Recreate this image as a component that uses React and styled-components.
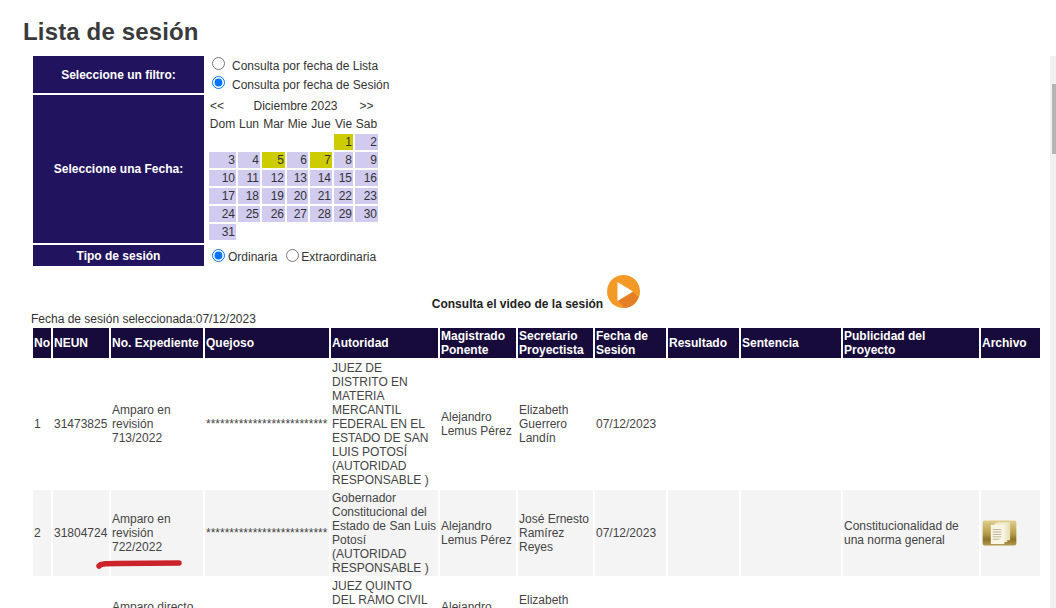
import styled, { createGlobalStyle } from 'styled-components';

const GlobalStyle = createGlobalStyle`
  html, body {
    margin: 0;
    height: 608px;
    overflow: hidden;
    background: #fff;
  }
  body {
    font-family: "Liberation Sans", Arial, sans-serif;
    font-size: 12px;
    line-height: 14px;
    color: #333;
  }
`;

const Page = styled.div`
  position: relative;
  width: 1056px;
  height: 608px;
  overflow: hidden;
`;

const Title = styled.h1`
  margin: 0;
  padding: 18px 0 0 23px;
  height: 36px;
  font-size: 24px;
  line-height: 28px;
  font-weight: bold;
  letter-spacing: 0.15px;
  color: #3a3a3a;
`;

const Content = styled.div`
  width: 1011px;
  margin-left: 31px;
`;

const FilterTable = styled.table`
  border-collapse: separate;
  border-spacing: 2px;
  table-layout: fixed;
  width: 375px;
`;

const FilterLabel = styled.td`
  width: 171px;
  height: ${(p) => p.$height}px;
  padding: 0;
  background: #22135e;
  color: #fff;
  font-weight: bold;
  text-align: center;
`;

const FilterValue = styled.td`
  padding: 0;
  vertical-align: top;
  white-space: nowrap;
`;

const RadioLine = styled.label`
  display: flex;
  align-items: center;
  box-sizing: border-box;
  height: 18.5px;
  padding: 2px 0 0 6px;
`;

const RadioRow = styled.div`
  display: flex;
  align-items: center;
  height: 21px;
  padding: 2px 0 0 6px;
  box-sizing: border-box;
`;

const Radio = styled.input.attrs({ type: 'radio' })`
  width: 13px;
  height: 13px;
  margin: 0 ${(p) => p.$gap}px ${(p) => p.$lift}px 0;
  flex: none;
`;

const TipoLabel = styled.span`
  margin-right: 9px;
`;

const CalendarTable = styled.table`
  border-collapse: separate;
  border-spacing: 2px;
  table-layout: fixed;
  width: 173px;
  margin: 1px 0 0 1px;
`;

const NavCell = styled.td`
  height: 16px;
  padding: 0 0 0 ${(p) => (p.$left ? 1 : 0)}px;
  text-align: ${(p) => (p.$left ? 'left' : 'center')};
`;

const WeekDay = styled.th`
  height: 16px;
  padding: 0;
  font-weight: normal;
  text-align: center;
`;

const DayCell = styled.td`
  height: 16px;
  padding: 0 1px 0 0;
  text-align: right;
  background: ${(p) => (p.$empty ? 'transparent' : p.$marked ? '#cccc00' : '#d0cbef')};
`;

const VideoLine = styled.div`
  display: flex;
  align-items: flex-end;
  justify-content: center;
  gap: 4px;
  margin-top: 8px;
  padding-right: 1px;
  height: 32px;
  font-weight: bold;
  color: #222;
`;

const VideoText = styled.span`
  margin-bottom: -3px;
`;

const SelectedDate = styled.div`
  margin-top: 4px;
  height: 14px;
`;

const SessionTable = styled.table`
  border-collapse: separate;
  border-spacing: 2px;
  table-layout: fixed;
  width: 1011px;
`;

const HeadCell = styled.th`
  height: 30px;
  padding: 0 1px;
  background: #170b3b;
  color: #fff;
  font-weight: bold;
  text-align: left;
  width: ${(p) => p.$width}px;
  box-sizing: border-box;
`;

const Cell = styled.td`
  padding: 1px;
  height: ${(p) => p.$height || 'auto'};
  background: ${(p) => (p.$shaded ? '#f4f4f4' : 'transparent')};
  color: #444;
  vertical-align: ${(p) => (p.$top ? 'top' : 'middle')};
  white-space: ${(p) => (p.$nowrap ? 'nowrap' : 'normal')};
  overflow: hidden;
`;

const Underline = styled.svg`
  position: absolute;
  left: 95px;
  top: 559px;
`;

const FakeScrollbar = styled.div`
  position: absolute;
  left: 1050px;
  top: 56px;
  bottom: 0;
  width: 6px;
  background: #f1f1f1;
`;

const ScrollThumb = styled.div`
  margin: 28px 0 0 2px;
  width: 4px;
  height: 70px;
  background: #b5b5b5;
`;

const PlayIcon = () => (
  <svg width="33" height="33" viewBox="0 0 33 33">
    <circle cx="16.5" cy="16.5" r="16.5" fill="#f39a26" />
    <path d="M11 26 L26 17 L31.5 22 A16.5 16.5 0 0 1 18 33 Z" fill="#e57f27" />
    <path d="M10.5 7 L26 16.5 L10.5 26 Z" fill="#fff" />
  </svg>
);

const FileIcon = () => (
  <svg width="35" height="26" viewBox="0 0 36 27" style={{ display: 'block' }}>
    <defs>
      <linearGradient id="folderGold" x1="0" y1="0" x2="0" y2="1">
        <stop offset="0" stopColor="#e0cf8c" />
        <stop offset="0.55" stopColor="#b39a45" />
        <stop offset="0.75" stopColor="#8d7528" />
        <stop offset="1" stopColor="#b39a4d" />
      </linearGradient>
    </defs>
    <rect x="0.5" y="0.5" width="35" height="26" rx="2" fill="url(#folderGold)" />
    <rect x="16" y="2" width="13" height="19" fill="#e9e2bd" />
    <rect x="13" y="3" width="13" height="20" fill="#f1ecd0" />
    <rect x="9" y="5" width="14" height="20" fill="#f8f5e2" />
    <path d="M11 10h9M11 12.5h9M11 15h9M11 17.5h9M11 20h7" stroke="#a9a58c" strokeWidth="0.8" />
  </svg>
);

const calendarWeeks = [
  [null, null, null, null, null, 1, 2],
  [3, 4, 5, 6, 7, 8, 9],
  [10, 11, 12, 13, 14, 15, 16],
  [17, 18, 19, 20, 21, 22, 23],
  [24, 25, 26, 27, 28, 29, 30],
  [31, null, null, null, null, null, null],
];
const markedDays = [1, 5, 7];
const weekDays = ['Dom', 'Lun', 'Mar', 'Mie', 'Jue', 'Vie', 'Sab'];
const calendarCols = [27, 22, 23, 21, 22, 19, 23];

const columns = [
  ['No', 18],
  ['NEUN', 56],
  ['No. Expediente', 92],
  ['Quejoso', 124],
  ['Autoridad', 107],
  ['Magistrado Ponente', 76],
  ['Secretario Proyectista', 75],
  ['Fecha de Sesión', 71],
  ['Resultado', 71],
  ['Sentencia', 100],
  ['Publicidad del Proyecto', 136],
  ['Archivo', 59],
];

const stars = '*'.repeat(26);

const rows = [
  {
    no: '1',
    neun: '31473825',
    exp: 'Amparo en revisión 713/2022',
    autoridad: 'JUEZ DE DISTRITO EN MATERIA MERCANTIL FEDERAL EN EL ESTADO DE SAN LUIS POTOSÍ (AUTORIDAD RESPONSABLE )',
    magistrado: 'Alejandro Lemus Pérez',
    secretario: 'Elizabeth Guerrero Landín',
    fecha: '07/12/2023',
    publicidad: '',
  },
  {
    no: '2',
    neun: '31804724',
    exp: 'Amparo en revisión 722/2022',
    autoridad: 'Gobernador Constitucional del Estado de San Luis Potosí (AUTORIDAD RESPONSABLE )',
    magistrado: 'Alejandro Lemus Pérez',
    secretario: 'José Ernesto Ramírez Reyes',
    fecha: '07/12/2023',
    publicidad: 'Constitucionalidad de una norma general',
    file: true,
  },
  {
    // only the top of this row is on screen
    no: '',
    neun: '',
    exp: (
      <>
        Amparo directo
        <br />
        &nbsp;
      </>
    ),
    autoridad: 'JUEZ QUINTO DEL RAMO CIVIL',
    magistrado: 'Alejandro Lemus Pérez',
    secretario: 'Elizabeth Guerrero Landín',
    fecha: '',
    publicidad: '',
    height: '70px',
    top: true,
  },
];

function Calendar() {
  return (
    <CalendarTable>
      <colgroup>
        {calendarCols.map((w, i) => (
          <col key={i} width={w} />
        ))}
      </colgroup>
      <tbody>
        <tr>
          <NavCell $left>&lt;&lt;</NavCell>
          <NavCell colSpan={5}>Diciembre 2023</NavCell>
          <NavCell>&gt;&gt;</NavCell>
        </tr>
        <tr>
          {weekDays.map((d) => (
            <WeekDay key={d}>{d}</WeekDay>
          ))}
        </tr>
        {calendarWeeks.map((week, i) => (
          <tr key={i}>
            {week.map((day, j) => (
              <DayCell key={j} $empty={!day} $marked={markedDays.includes(day)}>
                {day}
              </DayCell>
            ))}
          </tr>
        ))}
      </tbody>
    </CalendarTable>
  );
}

export default function App() {
  return (
    <Page>
      <GlobalStyle />
      <Title>Lista de sesión</Title>
      <Content>
        <FilterTable>
          <tbody>
            <tr>
              <FilterLabel $height={37}>Seleccione un filtro:</FilterLabel>
              <FilterValue>
                <RadioLine>
                  <Radio name="filtro" $gap={7} $lift={5} />
                  Consulta por fecha de Lista
                </RadioLine>
                <RadioLine>
                  <Radio name="filtro" $gap={7} $lift={5} defaultChecked />
                  Consulta por fecha de Sesión
                </RadioLine>
              </FilterValue>
            </tr>
            <tr>
              <FilterLabel $height={148}>Seleccione una Fecha:</FilterLabel>
              <FilterValue>
                <Calendar />
              </FilterValue>
            </tr>
            <tr>
              <FilterLabel $height={21}>Tipo de sesión</FilterLabel>
              <FilterValue>
                <RadioRow>
                  <Radio name="tipo" $gap={3} $lift={2} defaultChecked />
                  <TipoLabel>Ordinaria</TipoLabel>
                  <Radio name="tipo" $gap={2} $lift={2} />
                  Extraordinaria
                </RadioRow>
              </FilterValue>
            </tr>
          </tbody>
        </FilterTable>
        <VideoLine>
          <VideoText>Consulta el video de la sesión</VideoText>
          <PlayIcon />
        </VideoLine>
        <SelectedDate>Fecha de sesión seleccionada:07/12/2023</SelectedDate>
        <SessionTable>
          <thead>
            <tr>
              {columns.map(([label, width]) => (
                <HeadCell key={label} $width={width}>
                  {label}
                </HeadCell>
              ))}
            </tr>
          </thead>
          <tbody>
            {rows.map((row, i) => {
              const shaded = i % 2 === 1;
              return (
                <tr key={i}>
                  <Cell $shaded={shaded} $height={row.height}>{row.no}</Cell>
                  <Cell $shaded={shaded}>{row.neun}</Cell>
                  <Cell $shaded={shaded}>{row.exp}</Cell>
                  <Cell $shaded={shaded} $nowrap>
                    {row.no ? stars : ''}
                  </Cell>
                  <Cell $shaded={shaded} $top={row.top}>{row.autoridad}</Cell>
                  <Cell $shaded={shaded}>{row.magistrado}</Cell>
                  <Cell $shaded={shaded}>{row.secretario}</Cell>
                  <Cell $shaded={shaded}>{row.fecha}</Cell>
                  <Cell $shaded={shaded} />
                  <Cell $shaded={shaded} />
                  <Cell $shaded={shaded}>{row.publicidad}</Cell>
                  <Cell $shaded={shaded}>{row.file && <FileIcon />}</Cell>
                </tr>
              );
            })}
          </tbody>
        </SessionTable>
      </Content>
      <Underline width="90" height="10" viewBox="0 0 90 10">
        <path d="M4 7 C6 4.5 12 4.5 22 4.5 L84 4" fill="none" stroke="#cc2229" strokeWidth="5.5" strokeLinecap="round" />
      </Underline>
      <FakeScrollbar>
        <ScrollThumb />
      </FakeScrollbar>
    </Page>
  );
}
